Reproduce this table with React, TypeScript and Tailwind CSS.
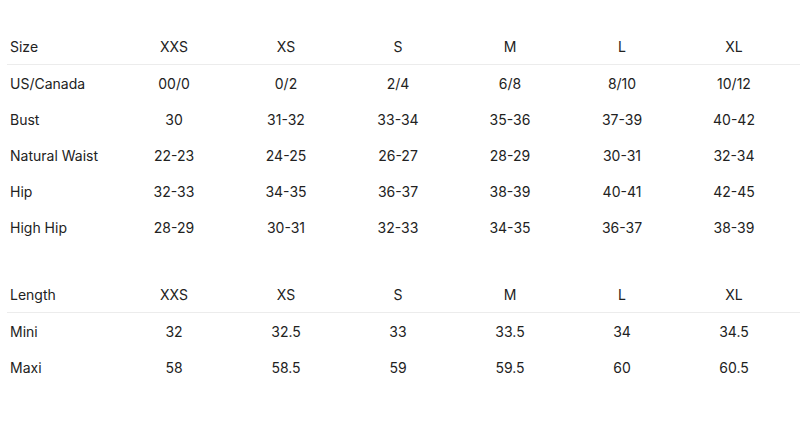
const sizes = ['XXS', 'XS', 'S', 'M', 'L', 'XL'];

const bodyRows = [
  { label: 'US/Canada', values: ['00/0', '0/2', '2/4', '6/8', '8/10', '10/12'] },
  { label: 'Bust', values: ['30', '31-32', '33-34', '35-36', '37-39', '40-42'] },
  { label: 'Natural Waist', values: ['22-23', '24-25', '26-27', '28-29', '30-31', '32-34'] },
  { label: 'Hip', values: ['32-33', '34-35', '36-37', '38-39', '40-41', '42-45'] },
  { label: 'High Hip', values: ['28-29', '30-31', '32-33', '34-35', '36-37', '38-39'] },
];

const lengthRows = [
  { label: 'Mini', values: ['32', '32.5', '33', '33.5', '34', '34.5'] },
  { label: 'Maxi', values: ['58', '58.5', '59', '59.5', '60', '60.5'] },
];

function Row({ label, values, head }: { label: string; values: string[]; head?: boolean }) {
  return (
    <div
      className={`grid grid-cols-[111px_repeat(6,112px)] h-[36px] items-center ${
        head ? 'border-b border-[#ececec]' : ''
      }`}
    >
      <div className="pl-[3px]">{label}</div>
      {values.map((v, i) => (
        <div key={i} className="text-center">
          {v}
        </div>
      ))}
    </div>
  );
}

function SizeTable({ title, rows }: { title: string; rows: { label: string; values: string[] }[] }) {
  return (
    <div>
      <Row label={title} values={sizes} head />
      {rows.map((r) => (
        <Row key={r.label} label={r.label} values={r.values} />
      ))}
    </div>
  );
}

export default function App() {
  return (
    <div className="w-[800px] h-[442px] bg-white overflow-hidden pl-[7px] pt-[29px] text-[14px] text-[#222] font-['Inter',sans-serif]">
      <div className="flex flex-col gap-[32px]">
        <SizeTable title="Size" rows={bodyRows} />
        <SizeTable title="Length" rows={lengthRows} />
      </div>
    </div>
  );
}
